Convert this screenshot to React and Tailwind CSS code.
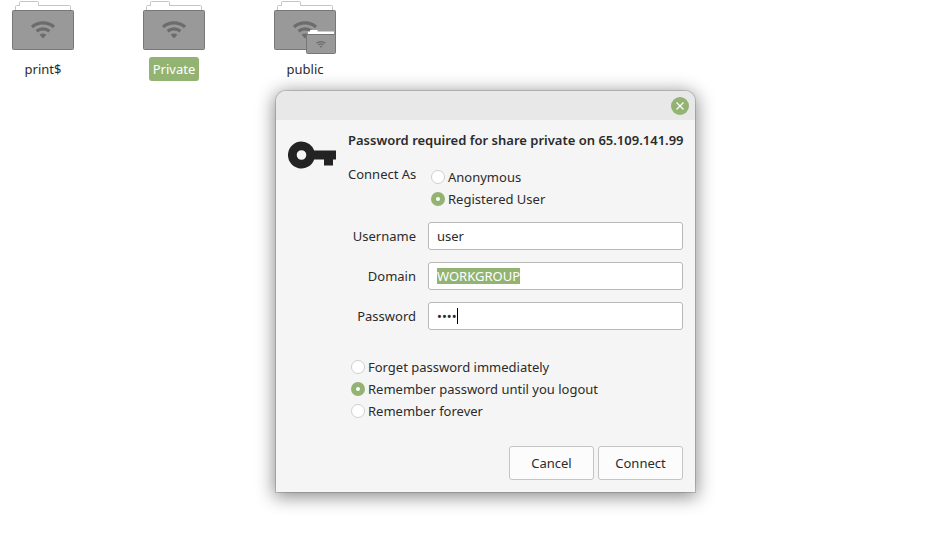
import { useState } from "react";

const shares = [
  { name: "print$" },
  { name: "Private", selected: true },
  { name: "public", emblem: true },
];

function WifiMark() {
  return (
    <g fill="none" stroke="#6c6c6c" strokeWidth="3.2">
      <path d="M20 27C26 21.4 36 21.4 42 27" />
      <path d="M24.6 31.2C28.2 28.2 33.8 28.2 37.4 31.2" />
      <path
        d="M31 38.4L27.6 34.8C29.4 33.2 32.6 33.2 34.4 34.8Z"
        fill="#6c6c6c"
        stroke="none"
      />
    </g>
  );
}

function FolderIcon({ emblem }) {
  return (
    <svg viewBox="0 0 62 54" className="w-full h-[54px]" aria-hidden="true">
      <path
        d="M3.5 10V6.5Q3.5 5.5 4.5 5.5H7.5V2.5Q7.5 1.5 8.5 1.5H25.5Q26.5 1.5 26.5 2.5V5.5H57.5Q58.5 5.5 58.5 6.5V10"
        fill="#fff"
        stroke="#c4c4c4"
      />
      <rect
        x="0.5"
        y="10.5"
        width="61"
        height="39"
        rx="1"
        fill="#999"
        stroke="#777"
      />
      <WifiMark />
      {emblem && (
        <g>
          <path d="M34 34V31.5H36V30H43.5V31.5H60V34Z" fill="#fff" />
          <rect
            x="32.5"
            y="34.5"
            width="29"
            height="19"
            rx="1"
            fill="#999"
            stroke="#777"
          />
          <g transform="translate(34.5 32.5) scale(0.4)">
            <WifiMark />
          </g>
        </g>
      )}
    </svg>
  );
}

function KeyIcon() {
  return (
    <svg viewBox="0 0 48 28" className="w-12 h-7 shrink-0" aria-hidden="true">
      <path
        fill="#232323"
        fillRule="evenodd"
        d="M13.5 0.5A13.5 13.5 0 1 0 26.2 18.5H36V24.5H45V18.5H48V9.5H26.2A13.5 13.5 0 0 0 13.5 0.5ZM13.5 9.2A4.8 4.8 0 1 1 13.5 18.8A4.8 4.8 0 1 1 13.5 9.2Z"
      />
    </svg>
  );
}

function Radio({ name, label, value, selected, onSelect }) {
  return (
    <label className="flex items-center gap-[3px] h-[22px] pl-[3px]">
      <input
        type="radio"
        name={name}
        value={value}
        checked={selected === value}
        onChange={() => onSelect(value)}
        className="appearance-none size-[14px] rounded-full border border-[#d0d0d0] bg-white checked:border-[5px] checked:border-[#92b372]"
      />
      {label}
    </label>
  );
}

function Field({ id, label, children }) {
  return (
    <>
      <label htmlFor={id} className="text-right">
        {label}
      </label>
      <div className="flex items-center h-7 px-2 rounded-[3px] border border-[#b8b8b8] bg-white">
        {children}
      </div>
    </>
  );
}

export default function App() {
  const [connectAs, setConnectAs] = useState("user");
  const [remember, setRemember] = useState("logout");
  const [username, setUsername] = useState("user");
  const [domain, setDomain] = useState("WORKGROUP");
  const [password, setPassword] = useState("pass");

  return (
    <main className="relative min-h-screen overflow-hidden bg-white font-['Noto_Sans',sans-serif] text-[13px] leading-4 text-[#2b2b2b]">
      <ul className="flex gap-[69px] pl-3">
        {shares.map((share) => (
          <li
            key={share.name}
            className="flex flex-col items-center gap-[3px] w-[62px]"
          >
            <FolderIcon emblem={share.emblem} />
            <span
              className={
                share.selected
                  ? "px-1 py-1 rounded-[3px] bg-[#92b372] text-white"
                  : "px-1 py-1"
              }
            >
              {share.name}
            </span>
          </li>
        ))}
      </ul>

      {/* the dialog floats over the file list */}
      <section
        role="dialog"
        aria-labelledby="dialog-title"
        className="absolute left-[276px] top-[91px] w-[419px] rounded-t-[10px] bg-[#f5f5f5] shadow-[0_0_0_1px_rgba(0,0,0,0.15),0_3px_18px_2px_rgba(0,0,0,0.45)]"
      >
        <header className="flex items-center justify-end h-[29px] px-[6px] rounded-t-[10px] bg-[#e8e8e8]">
          <button
            aria-label="Close"
            className="flex items-center justify-center size-[18px] rounded-full bg-[#92b372]"
          >
            <svg viewBox="0 0 8 8" className="size-2" aria-hidden="true">
              <path
                d="M0.5 0.5L7.5 7.5M7.5 0.5L0.5 7.5"
                stroke="#fff"
                strokeWidth="1.2"
              />
            </svg>
          </button>
        </header>

        <form
          onSubmit={(e) => e.preventDefault()}
          className="px-3 pt-[10px] pb-3"
        >
          <div className="flex gap-3">
            <div className="pt-[11px]">
              <KeyIcon />
            </div>
            <div className="flex-1 min-w-0">
              <h1
                id="dialog-title"
                className="mb-4 leading-5 font-semibold whitespace-nowrap"
              >
                Password required for share private on 65.109.141.99
              </h1>

              <div className="grid grid-cols-[68px_1fr] gap-3 items-center">
                <span
                  id="connect-as"
                  className="self-start text-right whitespace-nowrap"
                >
                  Connect As
                </span>
                <div role="radiogroup" aria-labelledby="connect-as">
                  <Radio
                    name="connectAs"
                    label="Anonymous"
                    value="anonymous"
                    selected={connectAs}
                    onSelect={setConnectAs}
                  />
                  <Radio
                    name="connectAs"
                    label="Registered User"
                    value="user"
                    selected={connectAs}
                    onSelect={setConnectAs}
                  />
                </div>

                <Field id="username" label="Username">
                  <input
                    id="username"
                    type="text"
                    value={username}
                    onChange={(e) => setUsername(e.target.value)}
                    className="w-full outline-none"
                  />
                </Field>
                <Field id="domain" label="Domain">
                  <input
                    id="domain"
                    type="text"
                    value={domain}
                    onChange={(e) => setDomain(e.target.value)}
                    className="field-sizing-content bg-[#92b372] text-white outline-none"
                  />
                </Field>
                <Field id="password" label="Password">
                  <input
                    id="password"
                    type="password"
                    value={password}
                    onChange={(e) => setPassword(e.target.value)}
                    className="field-sizing-content outline-none"
                  />
                  <span className="w-px h-4 bg-black" />
                </Field>
              </div>

              <div
                role="radiogroup"
                aria-label="Remember password"
                className="mt-[26px]"
              >
                <Radio
                  name="remember"
                  label="Forget password immediately"
                  value="never"
                  selected={remember}
                  onSelect={setRemember}
                />
                <Radio
                  name="remember"
                  label="Remember password until you logout"
                  value="logout"
                  selected={remember}
                  onSelect={setRemember}
                />
                <Radio
                  name="remember"
                  label="Remember forever"
                  value="forever"
                  selected={remember}
                  onSelect={setRemember}
                />
              </div>
            </div>
          </div>

          <div className="flex justify-end gap-1 mt-6">
            <button
              type="button"
              className="w-[85px] h-[34px] rounded-[3px] border border-[#c4c4c4] bg-[#fcfcfc]"
            >
              Cancel
            </button>
            <button
              type="submit"
              className="w-[85px] h-[34px] rounded-[3px] border border-[#c4c4c4] bg-[#fcfcfc]"
            >
              Connect
            </button>
          </div>
        </form>
      </section>
    </main>
  );
}
